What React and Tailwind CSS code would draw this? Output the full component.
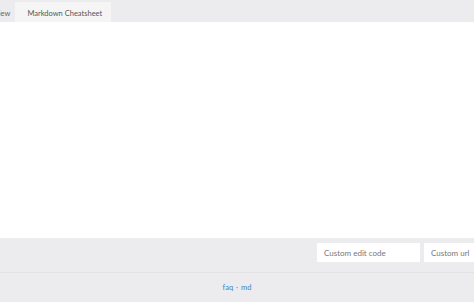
import React from "react";

const App = () => {
  return (
    <div className="w-[474px] h-[302px] overflow-hidden flex flex-col bg-[#ececee] font-['Lato',sans-serif] text-[#555]">
      {/* tabs */}
      <div className="h-[22px] flex items-end overflow-hidden shrink-0">
        <div className="-ml-[27px] h-[20px] pl-[11px] pr-[5px] pt-[3px] flex items-center text-[7.5px] text-[#666]">
          Preview
        </div>
        <div className="h-[20px] pl-[12px] pr-[9px] pt-[3px] flex items-center bg-[#f5f5f6] text-[7.5px] text-[#555]">
          Markdown Cheatsheet
        </div>
      </div>

      {/* editor */}
      <div className="h-[216px] bg-white shrink-0"></div>

      {/* options bar */}
      <div className="h-[35px] flex items-start pt-[5px] justify-end gap-[4px] overflow-hidden shrink-0 border-b border-[#e2e2e4]">
        <input
          className="w-[103px] h-[19px] bg-white px-[7px] text-[8px] text-[#555] placeholder-[#777] outline-none shrink-0"
          placeholder="Custom edit code"
        />
        <input
          className="w-[103px] h-[19px] bg-white px-[7px] text-[8px] text-[#555] placeholder-[#777] outline-none shrink-0 -mr-[53px]"
          placeholder="Custom url"
        />
      </div>

      {/* footer */}
      <div className="flex-1 flex items-center justify-center text-[7.5px] text-[#3c84c6]">
        <a href="#">faq</a>
        <span className="mx-[3px]">·</span>
        <a href="#">md</a>
      </div>
    </div>
  );
};

export default App;
